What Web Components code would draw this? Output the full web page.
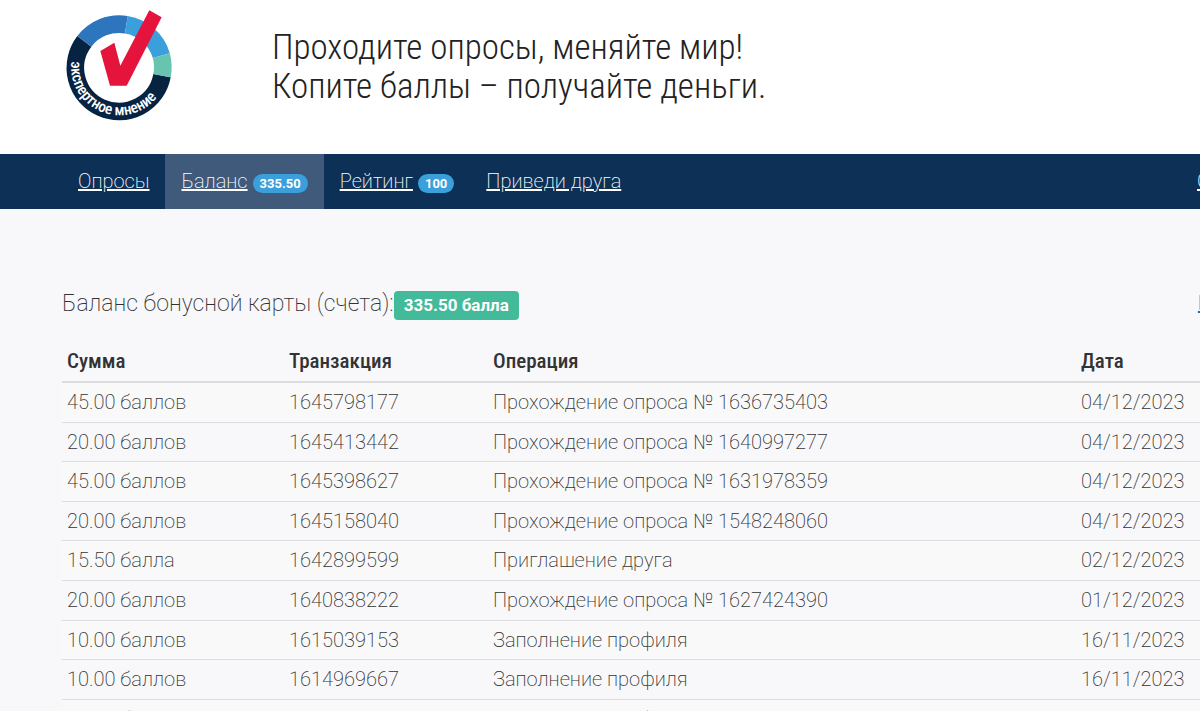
<!DOCTYPE html>
<html lang="ru">
<head>
<meta charset="utf-8">
<title>Экспертное мнение</title>
<style>
  body { margin: 0; background: #f8f8fb; color: #333; font: 300 20px/1.43 Roboto, "Open Sans", sans-serif; }
</style>
</head>
<body>
<balance-page></balance-page>
<script>
const define = (name, html, setup) => {
  const template = document.createElement('template');
  template.innerHTML = html;
  customElements.define(name, class extends HTMLElement {
    constructor() {
      super();
      this.attachShadow({ mode: 'open' }).append(template.content.cloneNode(true));
    }
    connectedCallback() { if (setup) setup(this, this.shadowRoot); }
  });
};

define('brand-logo', `
<style>
  :host { display: block; width: 140px; }
  svg { display: block; width: 100%; }
  text { font: 500 46px "Roboto Condensed", Roboto, sans-serif; fill: #fff; }
</style>
<svg viewBox="0 0 420 390" role="img" aria-label="Экспертное мнение">
  <g fill="none" stroke-width="53">
    <path stroke="#062342" d="M336 227A131 131 0 1 1 103 124"/>
    <path stroke="#2d75bd" d="M103 124A131 131 0 0 1 229 74"/>
    <path stroke="#3a9fda" d="M229 74A131 131 0 0 1 334 167"/>
    <path stroke="#68c4af" d="M334 167A131 131 0 0 1 336 227"/>
    <path id="arc" d="M64 184A145 145 0 1 0 348 163"/>
  </g>
  <path fill="#e4143c" d="M151 153L193 128L211 197L298 31L335 52L230 257H180Z"/>
  <text><textPath href="#arc">экспертное мнение</textPath></text>
</svg>`);

define('page-header', `
<style>
  :host { display: flex; box-sizing: border-box; min-height: 154px; padding-left: 50px; gap: 82px; background: #fff; }
  h1 { margin: 28px 0 0; font: 300 35px/39px "Roboto Condensed", Roboto, sans-serif; color: #222; }
</style>
<slot name="logo"></slot>
<h1><slot></slot></h1>`);

define('nav-item', `
<style>
  :host { display: flex; align-items: center; padding: 0 16px; gap: 5px; white-space: nowrap; font-size: 20px; font-weight: 200; }
  :host([active]) { background: #3f5a7a; }
  a { color: #fff; text-decoration: underline; }
  .badge { padding: 0 7px; border-radius: 10px; background: #3a9fda; color: #fff; font-size: 13px; line-height: 19px; font-weight: 700; margin-top: 3px; }
</style>
<a href="#"><slot></slot></a>`, (host, root) => {
  if (!host.hasAttribute('badge')) return;
  const badge = document.createElement('span');
  badge.className = 'badge';
  badge.textContent = host.getAttribute('badge');
  root.append(badge);
});

define('nav-bar', `
<style>
  :host { display: block; background: #0d3057; overflow: hidden; }
  nav { display: flex; height: 55px; padding-left: 62px; }
  .end { display: flex; margin-left: auto; margin-right: -26px; }
</style>
<nav><slot></slot><div class="end"><slot name="end"></slot></div></nav>`);

define('balance-summary', `
<style>
  :host { display: flex; align-items: center; white-space: nowrap; }
  p { margin: 0; font-size: 23px; line-height: 30px; font-weight: 200; }
  strong { margin-top: 4px; padding: 0 10px; border-radius: 4px; background: #43bb9a; color: #fff; font-size: 17px; line-height: 29px; font-weight: 700; }
  a { margin-left: auto; margin-right: -12px; color: #0d6fc0; }
</style>
<p><slot></slot></p><strong><slot name="amount"></slot></strong><a href="#"><slot name="link"></slot></a>`);

define('transactions-table', `
<style>
  :host { display: block; }
  table { width: 100%; table-layout: fixed; border-collapse: collapse; text-align: left; white-space: nowrap; }
  .sum { width: 222px; } .id { width: 204px; } .date { width: 124px; }
  th, td { padding: 5px; }
  th { font-family: "Roboto Condensed", Roboto, sans-serif; font-weight: 500; font-size: 21px; line-height: 29px; border-bottom: 2px solid #ddd; }
  td { border-bottom: 1px solid #ddd; font-weight: 200; }
  tbody tr:nth-child(odd) { background: #f9f9f9; }
</style>
<table>
  <colgroup><col class="sum"><col class="id"><col><col class="date"></colgroup>
  <thead><tr><th scope="col">Сумма</th><th scope="col">Транзакция</th><th scope="col">Операция</th><th scope="col">Дата</th></tr></thead>
  <tbody></tbody>
</table>`, (host, root) => {
  const rows = [
    ['45.00 баллов', '1645798177', 'Прохождение опроса № 1636735403', '04/12/2023'],
    ['20.00 баллов', '1645413442', 'Прохождение опроса № 1640997277', '04/12/2023'],
    ['45.00 баллов', '1645398627', 'Прохождение опроса № 1631978359', '04/12/2023'],
    ['20.00 баллов', '1645158040', 'Прохождение опроса № 1548248060', '04/12/2023'],
    ['15.50 балла', '1642899599', 'Приглашение друга', '02/12/2023'],
    ['20.00 баллов', '1640838222', 'Прохождение опроса № 1627424390', '01/12/2023'],
    ['10.00 баллов', '1615039153', 'Заполнение профиля', '16/11/2023'],
    ['10.00 баллов', '1614969667', 'Заполнение профиля', '16/11/2023'],
    ['10.00 баллов', '1614969660', 'Заполнение профиля', '16/11/2023']
  ];
  const body = root.querySelector('tbody');
  for (const row of rows) {
    const tr = body.insertRow();
    for (const value of row) tr.insertCell().textContent = value;
  }
});

define('balance-page', `
<style>
  :host { display: block; height: 100vh; overflow: hidden; }
  main { padding: 78px 0 0 62px; }
  transactions-table { margin-top: 22px; }
</style>
<page-header><brand-logo slot="logo"></brand-logo>Проходите опросы, меняйте мир!<br>Копите баллы – получайте деньги.</page-header>
<nav-bar>
  <nav-item>Опросы</nav-item>
  <nav-item active badge="335.50">Баланс</nav-item>
  <nav-item badge="100">Рейтинг</nav-item>
  <nav-item>Приведи друга</nav-item>
  <nav-item slot="end">С</nav-item>
</nav-bar>
<main>
  <balance-summary>Баланс бонусной карты (счета):<span slot="amount">335.50 балла</span><span slot="link">П</span></balance-summary>
  <transactions-table></transactions-table>
</main>`);
</script>
</body>
</html>
